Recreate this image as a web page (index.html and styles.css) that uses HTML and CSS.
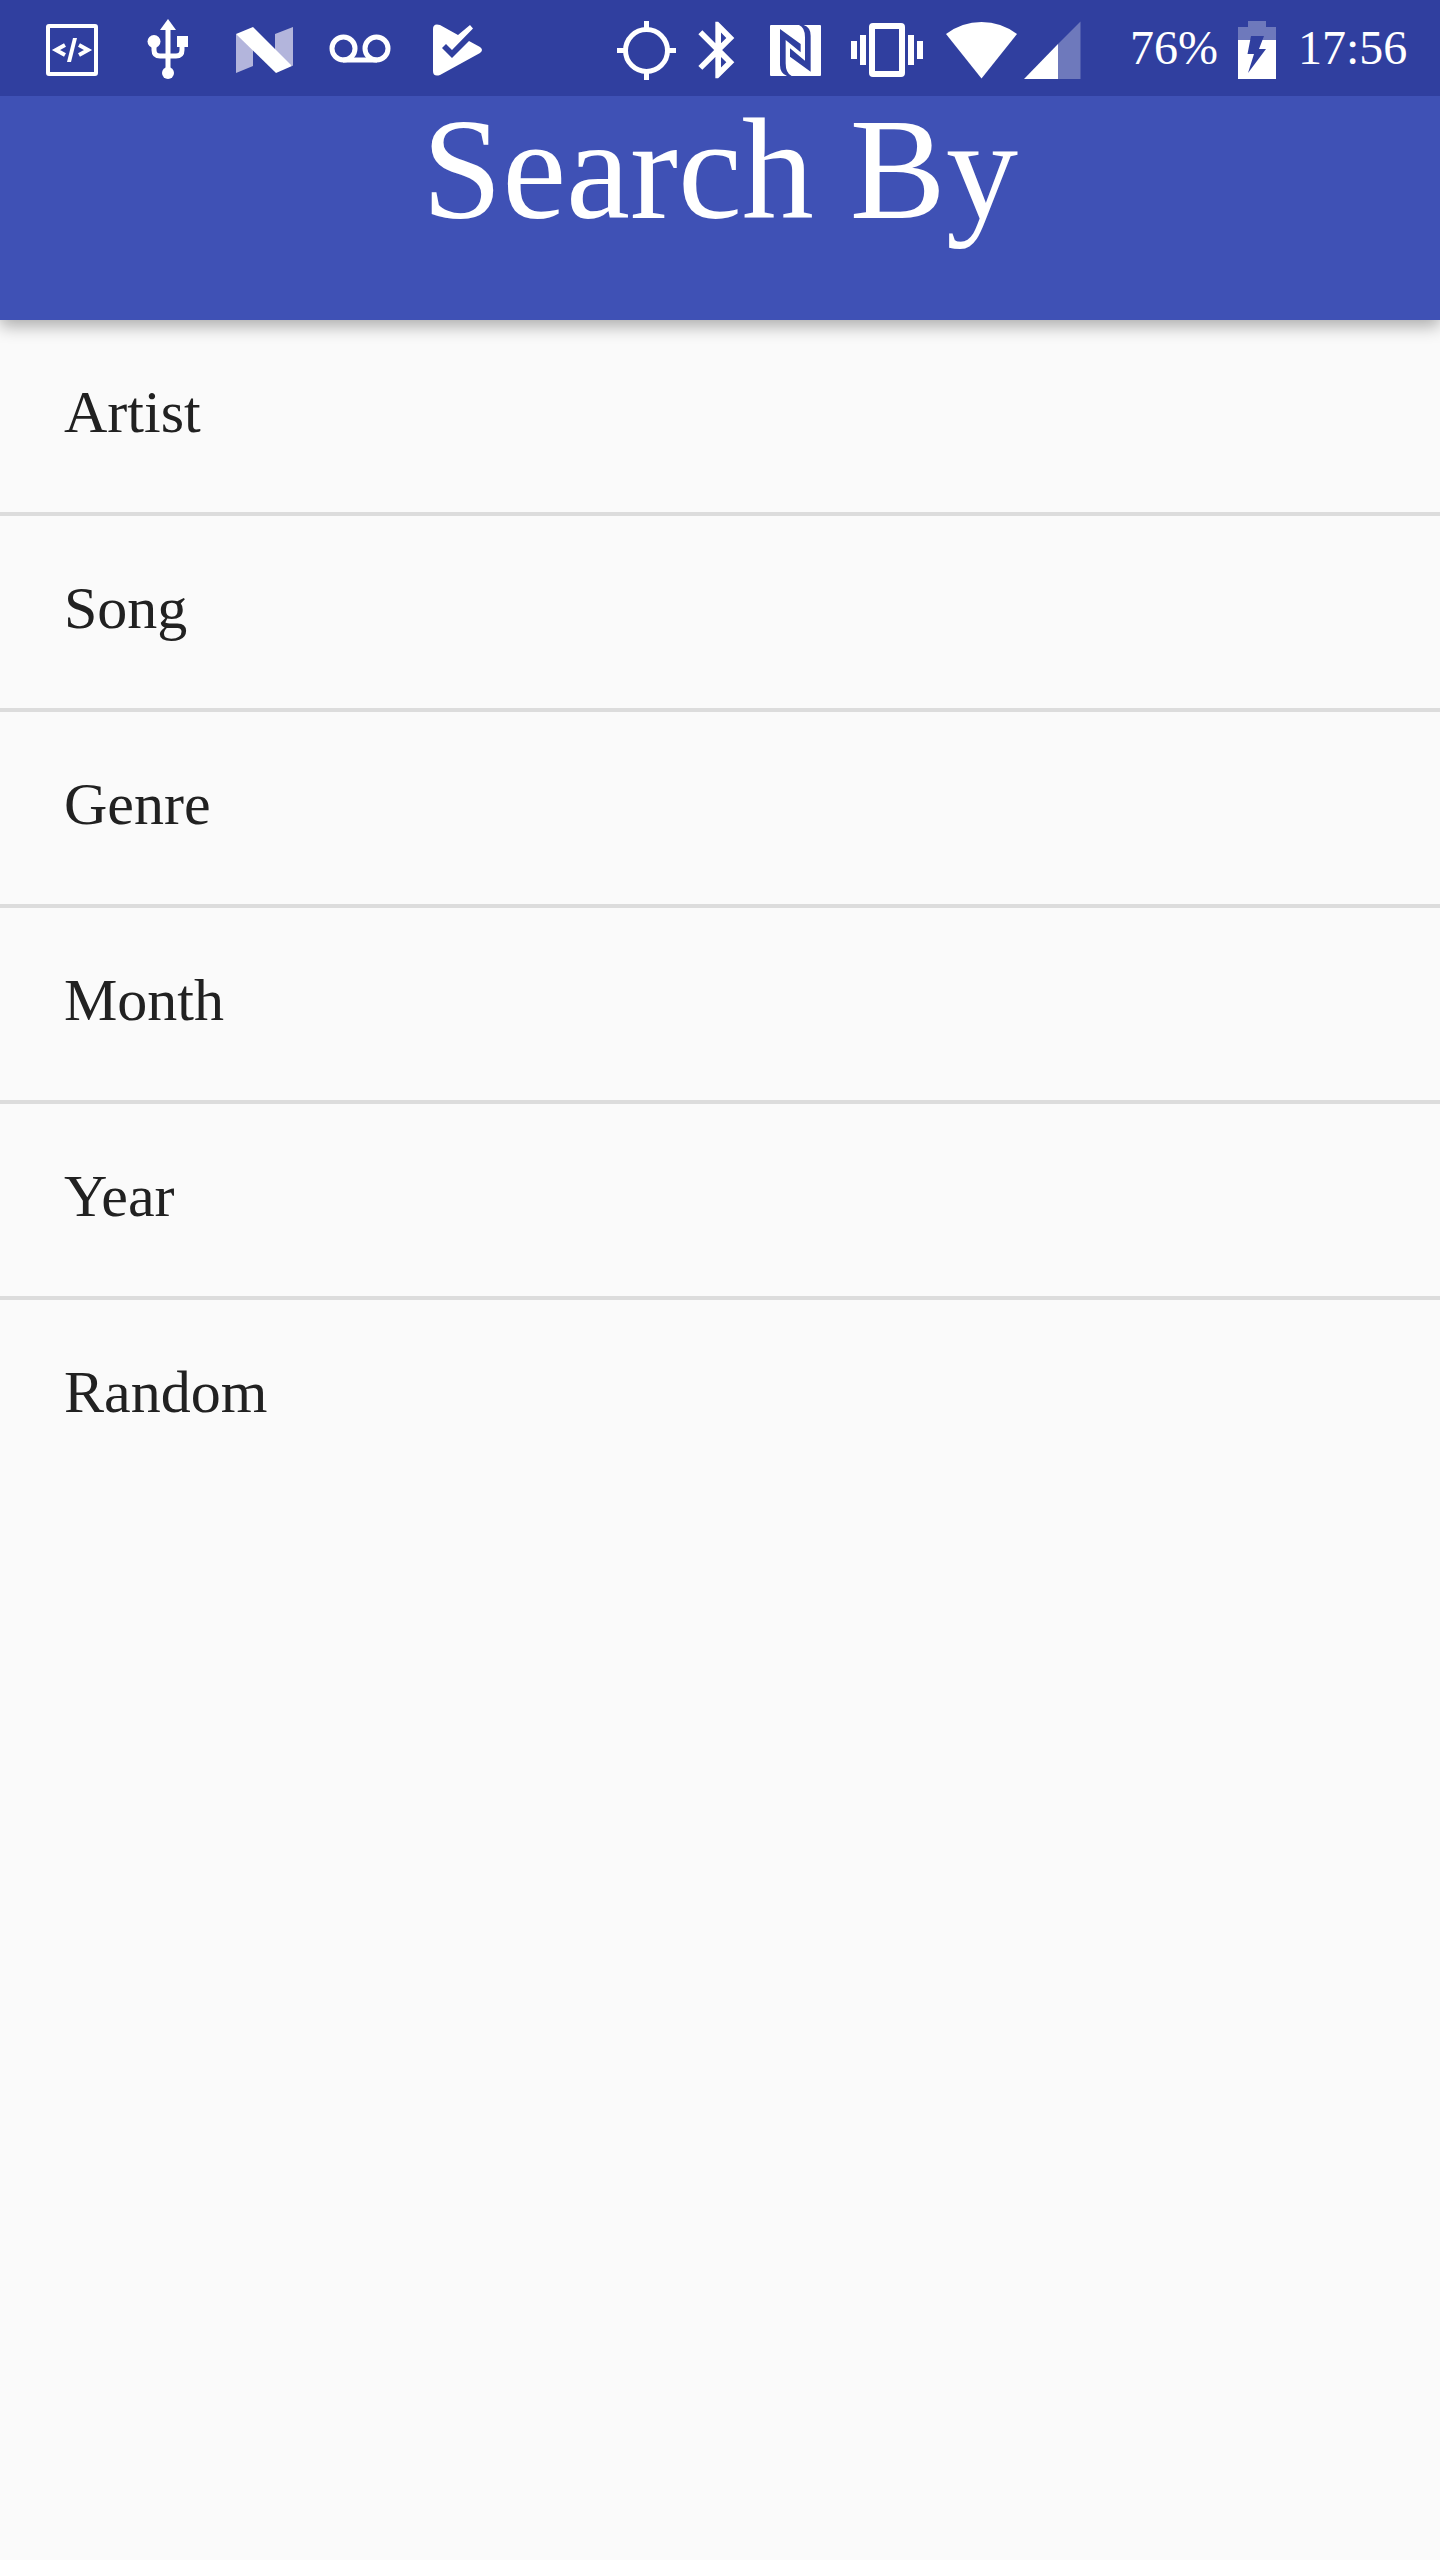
FILE: index.html
```
<!DOCTYPE html>
<html lang="en">
<head>
<meta charset="utf-8">
<meta name="viewport" content="width=device-width, initial-scale=1">
<title>Search By</title>
<link rel="stylesheet" href="styles.css">
</head>
<body>
<div class="status-bar">
  <div class="notifications">
    <svg class="icon" width="96" height="96" viewBox="24 0 96 96" role="img" aria-label="Developer mode">
      <rect class="line" x="48" y="26" width="48" height="48" rx="1" stroke-width="4"/>
      <path class="line" d="M65 45L56 50L65 55M79 45L88 50L79 55" stroke-width="4"/>
      <path d="M73 38H77L71 62H67Z"/>
    </svg>
    <svg class="icon" width="96" height="96" viewBox="120 0 96 96" role="img" aria-label="USB connected">
      <path d="M168 19L176 30H160Z"/>
      <path class="line" d="M168 28V70M154 44V50Q154 56 160 56H176Q182 56 182 50V44" stroke-width="5"/>
      <circle cx="168" cy="73" r="6"/>
      <circle cx="154" cy="41.500" r="6.500"/>
      <rect x="177" y="36" width="11" height="11"/>
    </svg>
    <svg class="icon" width="96" height="96" viewBox="216 0 96 96" role="img" aria-label="System update">
      <path class="faint-fold" d="M236 34L253 45V66L236 73ZM275 34L293 27V66L275 60Z"/>
      <path d="M236 34L253 27L292 66L276 73Z"/>
    </svg>
    <svg class="icon" width="96" height="96" viewBox="312 0 96 96" role="img" aria-label="Voicemail">
      <circle class="line" cx="343.500" cy="48.500" r="11.500" stroke-width="5"/>
      <circle class="line" cx="376.500" cy="48.500" r="11.500" stroke-width="5"/>
      <path class="line" d="M343 60H377" stroke-width="5"/>
    </svg>
    <svg class="icon" width="96" height="96" viewBox="408 0 96 96" role="img" aria-label="App updated">
      <path d="M458 35L470 25L473 28.500L452 50L446 44L442 48L452 58L469 41L480 47Q484 50 480 53L440 75Q433 77 433 71V29Q433 23 440 25Z"/>
    </svg>
  </div>
  <div class="system">
    <svg class="icon" width="76" height="96" viewBox="608 0 76 96" role="img" aria-label="Location">
      <circle class="line" cx="646.500" cy="50.500" r="21" stroke-width="5"/>
      <path class="line" d="M646.500 21V29M646.500 72V80M617 50.500H625M668 50.500H676" stroke-width="5"/>
    </svg>
    <svg class="icon" width="64" height="96" viewBox="684 0 64 96" role="img" aria-label="Bluetooth">
      <path transform="translate(684.200 16.100) scale(2.830)" d="M17.710 7.710L12 2h-1v7.590L6.410 5 5 6.410 10.590 12 5 17.590 6.410 19 11 14.410V22h1l5.710-5.710-4.300-4.290 4.300-4.290zM13 5.830l1.880 1.880L13 9.590V5.830zm1.880 10.460L13 18.170v-3.760l1.880 1.880z"/>
    </svg>
    <svg class="icon" width="96" height="96" viewBox="748 0 96 96" role="img" aria-label="NFC">
      <rect x="770" y="25" width="51" height="51" rx="1"/>
      <g class="cut" transform="translate(765 20) scale(.3333)">
        <path d="M45 27L107 72V97L62 60V130Q62 160 80 168H66Q45 160 45 135Z"/>
        <path d="M137 155L75 110V85L120 122V52Q120 22 102 15H116Q137 22 137 47Z"/>
      </g>
    </svg>
    <svg class="icon" width="88" height="96" viewBox="844 0 88 96" role="img" aria-label="Vibrate">
      <rect class="line" x="872" y="26" width="30" height="48" rx="1" stroke-width="6"/>
      <path d="M851 41h6v18h-6ZM860 35h6v30h-6ZM908 35h6v30h-6ZM917 41h6v18h-6Z"/>
    </svg>
    <svg class="icon" width="88" height="96" viewBox="932 0 88 96" role="img" aria-label="Wi-Fi">
      <path d="M981.500 78.500L946 34Q962 22 981.500 22T1017 34Z"/>
    </svg>
    <svg class="icon" width="64" height="96" viewBox="1020 0 64 96" role="img" aria-label="Mobile signal">
      <path class="faint" d="M1058 44L1080.500 21.500V79H1058Z"/>
      <path d="M1024 79L1058 44V79Z"/>
    </svg>
    <span class="level">76%</span>
    <svg class="icon" width="48" height="96" viewBox="1234 0 48 96" role="img" aria-label="Battery charging">
      <path class="faint" d="M1238 27H1248V21H1266V27H1276V40H1238Z"/>
      <path d="M1238 40H1276V79H1238Z"/>
      <path class="cut" d="M1251 36H1264L1259 49H1266L1248 73L1254 54H1247.500Z"/>
    </svg>
    <time class="clock">17:56</time>
  </div>
</div>
<header class="app-bar">
  <h1 class="title">Search By</h1>
</header>
<main>
  <ul class="list">
    <li class="item"><a class="item-link" href="#artist">Artist</a></li>
    <li class="item"><a class="item-link" href="#song">Song</a></li>
    <li class="item"><a class="item-link" href="#genre">Genre</a></li>
    <li class="item"><a class="item-link" href="#month">Month</a></li>
    <li class="item"><a class="item-link" href="#year">Year</a></li>
    <li class="item"><a class="item-link" href="#random">Random</a></li>
  </ul>
</main>
</body>
</html>
```
FILE: styles.css
```
* {
  box-sizing: border-box;
}

body {
  margin: 0;
  min-height: 100vh;
  background: #fafafa;
  color: #212121;
  font-family: "Liberation Serif", "Times New Roman", serif;
}

.status-bar {
  position: relative;
  z-index: 1;
  display: flex;
  justify-content: space-between;
  align-items: center;
  height: 96px;
  padding: 0 32px 0 24px;
  background: #303f9f;
  color: #fff;
  font-size: 48px;
  line-height: 96px;
}

.notifications,
.system {
  display: flex;
  align-items: center;
}

.icon {
  display: block;
  flex: none;
  fill: #fff;
}

.line {
  fill: none;
  stroke: #fff;
}

.faint {
  fill: #fff;
  fill-opacity: 0.3;
}

.faint-fold {
  fill: #b3b5dc;
}

.cut {
  fill: #303f9f;
}

.level {
  width: 88px;
  margin: 0 16px 0 46px;
}

.clock {
  width: 110px;
  margin-left: 16px;
}

.app-bar {
  position: relative;
  padding: 2px 32px 78px;
  background: #3f51b5;
  color: #fff;
  box-shadow: 0 6px 16px rgba(0, 0, 0, 0.32);
}

.title {
  margin: 0;
  font-size: 144px;
  font-weight: 400;
  line-height: 144px;
  text-align: center;
}

.list {
  margin: 0;
  padding: 0;
  list-style: none;
}

.item + .item {
  border-top: 4px solid #dcdcdc;
}

.item-link {
  display: block;
  padding: 60px 64px 68px;
  color: inherit;
  font-size: 60px;
  line-height: 64px;
  text-decoration: none;
}
```
